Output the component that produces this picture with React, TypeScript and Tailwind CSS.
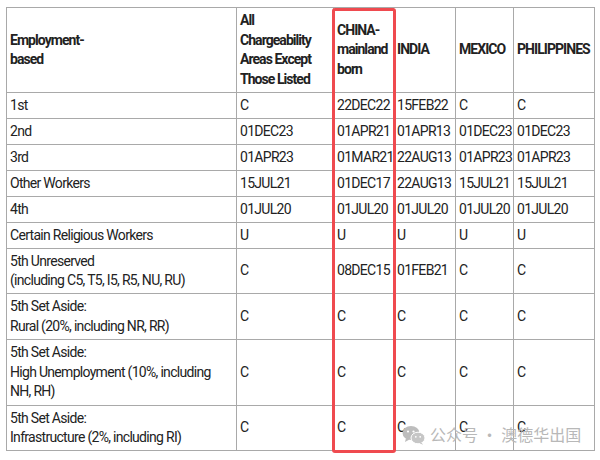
import React from "react";

type Row = { label: string[]; cells: string[]; h: string };

const rows: Row[] = [
  { label: ["1st"], cells: ["C", "22DEC22", "15FEB22", "C", "C"], h: "h-[26px]" },
  { label: ["2nd"], cells: ["01DEC23", "01APR21", "01APR13", "01DEC23", "01DEC23"], h: "h-[26px]" },
  { label: ["3rd"], cells: ["01APR23", "01MAR21", "22AUG13", "01APR23", "01APR23"], h: "h-[26px]" },
  { label: ["Other Workers"], cells: ["15JUL21", "01DEC17", "22AUG13", "15JUL21", "15JUL21"], h: "h-[26px]" },
  { label: ["4th"], cells: ["01JUL20", "01JUL20", "01JUL20", "01JUL20", "01JUL20"], h: "h-[26px]" },
  { label: ["Certain Religious Workers"], cells: ["U", "U", "U", "U", "U"], h: "h-[26px]" },
  {
    label: ["5th Unreserved", "(including C5, T5, I5, R5, NU, RU)"],
    cells: ["C", "08DEC15", "01FEB21", "C", "C"],
    h: "h-[45px]",
  },
  {
    label: ["5th Set Aside:", "Rural (20%, including NR, RR)"],
    cells: ["C", "C", "C", "C", "C"],
    h: "h-[46px]",
  },
  {
    label: ["5th Set Aside:", "High Unemployment (10%, including", "NH, RH)"],
    cells: ["C", "C", "C", "C", "C"],
    h: "h-[66px]",
  },
  {
    label: ["5th Set Aside:", "Infrastructure (2%, including RI)"],
    cells: ["C", "C", "C", "C", "C"],
    h: "h-[45px]",
  },
];

const headers: string[][] = [
  ["Employment-", "based"],
  ["All", "Chargeability", "Areas Except", "Those Listed"],
  ["CHINA-", "mainland", "born"],
  ["INDIA"],
  ["MEXICO"],
  ["PHILIPPINES"],
];

const Lines: React.FC<{ lines: string[] }> = ({ lines }) => (
  <>
    {lines.map((l, i) => (
      <div key={i} className="whitespace-nowrap">
        {l}
      </div>
    ))}
  </>
);

const WeChatIcon = () => (
  <svg width="24" height="20" viewBox="0 0 24 20">
    <ellipse cx="9" cy="8" rx="8.5" ry="7" fill="#bdbdbd" />
    <path d="M4 13 L3 17 L7.5 14.5 Z" fill="#bdbdbd" />
    <circle cx="6" cy="6.5" r="1.1" fill="#fff" />
    <circle cx="11.5" cy="6.5" r="1.1" fill="#fff" />
    <ellipse cx="16" cy="13" rx="7" ry="5.8" fill="#c6c6c6" stroke="#fff" strokeWidth="1" />
    <path d="M19.5 17.5 L21 19.8 L17.5 18.2 Z" fill="#c6c6c6" />
    <circle cx="13.8" cy="11.8" r="0.9" fill="#fff" />
    <circle cx="18.2" cy="11.8" r="0.9" fill="#fff" />
  </svg>
);

export default function App() {
  return (
    <div className="relative w-[600px] h-[460px] bg-white pt-[7px] pl-[6px] font-[Roboto,sans-serif] text-[14px] leading-[19.5px] text-[#222] tracking-[-0.7px]">
      <table className="table-fixed border-collapse w-[588px]">
        <colgroup>
          <col className="w-[230px]" />
          <col className="w-[97px]" />
          <col className="w-[60px]" />
          <col className="w-[62px]" />
          <col className="w-[58px]" />
          <col className="w-[81px]" />
        </colgroup>
        <thead>
          <tr className="h-[85px]">
            {headers.map((h, i) => (
              <th
                key={i}
                className="border border-[#a9a9a9] px-[3px] text-left align-middle font-bold tracking-[-0.95px]"
              >
                <Lines lines={h} />
              </th>
            ))}
          </tr>
        </thead>
        <tbody>
          {rows.map((r, i) => (
            <tr key={i} className={r.h}>
              <td className="border border-[#a9a9a9] px-[3px] align-middle">
                <Lines lines={r.label} />
              </td>
              {r.cells.map((c, j) => (
                <td key={j} className="border border-[#a9a9a9] px-[3px] align-middle whitespace-nowrap">
                  {c}
                </td>
              ))}
            </tr>
          ))}
        </tbody>
      </table>

      {/* red highlight around the China column */}
      <div className="absolute left-[332px] top-[8px] w-[64px] h-[445px] rounded-[3px] border-[3px] border-[#ef4a4f] pointer-events-none" />

      {/* watermark */}
      <div className="absolute left-[402px] top-[425px] flex items-center gap-[4px] pointer-events-none">
        <WeChatIcon />
        <span className="font-['Noto_Sans_CJK_SC',sans-serif] text-[16px] tracking-[0px] text-[#b8b8b8]">
          公众号 · 澳德华出国
        </span>
      </div>
    </div>
  );
}
